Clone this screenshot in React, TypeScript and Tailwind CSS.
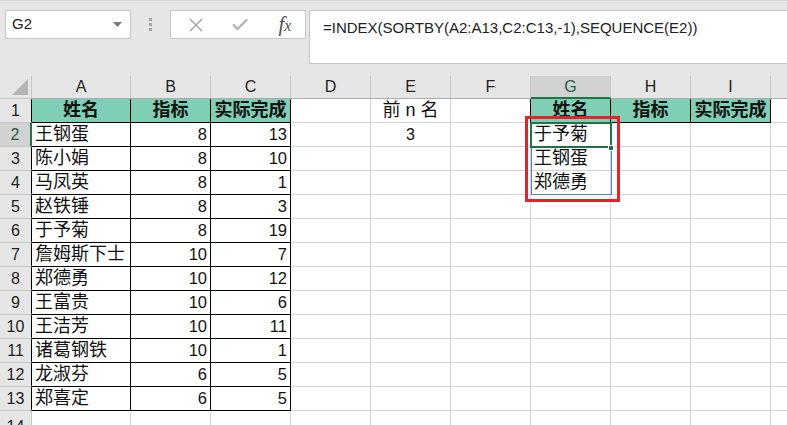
import React from "react";

const cols = ["A", "B", "C", "D", "E", "F", "G", "H", "I", "J"];

type Row = (string | number | null)[];

const data: Row[] = [
  ["姓名", "指标", "实际完成", null, "前 n 名", null, "姓名", "指标", "实际完成", null],
  ["王钢蛋", 8, 13, null, "3", null, "于予菊", null, null, null],
  ["陈小娟", 8, 10, null, null, null, "王钢蛋", null, null, null],
  ["马凤英", 8, 1, null, null, null, "郑德勇", null, null, null],
  ["赵铁锤", 8, 3, null, null, null, null, null, null, null],
  ["于予菊", 8, 19, null, null, null, null, null, null, null],
  ["詹姆斯下士", 10, 7, null, null, null, null, null, null, null],
  ["郑德勇", 10, 12, null, null, null, null, null, null, null],
  ["王富贵", 10, 6, null, null, null, null, null, null, null],
  ["王洁芳", 10, 11, null, null, null, null, null, null, null],
  ["诸葛钢铁", 10, 1, null, null, null, null, null, null, null],
  ["龙淑芬", 6, 5, null, null, null, null, null, null, null],
  ["郑喜定", 6, 5, null, null, null, null, null, null, null],
  [null, null, null, null, null, null, null, null, null, null],
];

function cellClass(r: number, c: number): string {
  const inTable = (r >= 1 && r <= 13 && c <= 2) || (r === 1 && c >= 6 && c <= 8);
  const leftOfG1 = r === 1 && c === 5;
  const header = r === 1 && (c <= 2 || (c >= 6 && c <= 8));
  let cls = "h-[24px] border-b border-r overflow-hidden whitespace-nowrap flex items-center ";
  if (inTable) cls += "border-b-black border-r-black ";
  else if (leftOfG1) cls += "border-b-[#d4d4d4] border-r-black ";
  else cls += "border-[#d4d4d4] ";
  if (header) cls += "bg-[#7fcfb6] justify-center font-bold ";
  else cls += "bg-white ";
  return cls;
}

export default function App() {
  return (
    <div
      className="w-[787px] h-[425px] overflow-hidden bg-white relative"
      style={{ fontFamily: '"Liberation Sans", "Noto Sans CJK SC", sans-serif' }}
    >
      {/* Formula bar area */}
      <div className="h-[76px] bg-[#e6e6e6] border-t border-[#d9d9d9] flex items-start pt-[9px] pl-[5px]">
        <div className="w-[126px] h-[29px] bg-white border border-[#c6c6c6] flex items-center justify-between pl-[6px] pr-[8px]">
          <span className="text-[15px] text-[#222]">G2</span>
          <svg width="9" height="5" viewBox="0 0 9 5">
            <path d="M0 0 L9 0 L4.5 5 Z" fill="#7a7a7a" />
          </svg>
        </div>
        <div className="w-[39px] h-[29px] flex flex-col items-center justify-center gap-[2px]">
          <div className="w-[3px] h-[3px] bg-[#a6a6a6]" />
          <div className="w-[3px] h-[3px] bg-[#a6a6a6]" />
          <div className="w-[3px] h-[3px] bg-[#a6a6a6]" />
        </div>
        <div className="w-[136px] h-[29px] bg-white border border-[#c6c6c6] flex items-center">
          <div className="w-[44px] flex justify-center pl-[6px]">
            <svg width="14" height="14" viewBox="0 0 14 14">
              <path d="M1 1 L13 13 M13 1 L1 13" stroke="#a8a8a8" strokeWidth="1.6" />
            </svg>
          </div>
          <div className="w-[46px] flex justify-center pl-[4px]">
            <svg width="16" height="13" viewBox="0 0 16 13">
              <path d="M1 6.5 L5.5 11 L15 1.5" stroke="#b0b0b0" strokeWidth="2.2" fill="none" />
            </svg>
          </div>
          <div className="flex-1 flex justify-center pl-[4px]">
            <span
              className="italic text-[21px] text-[#505050] leading-none"
              style={{ fontFamily: '"Liberation Serif", serif' }}
            >
              f<span className="text-[16px]">x</span>
            </span>
          </div>
        </div>
        <div className="ml-[3px] flex-1 h-[54px] bg-white border border-[#c6c6c6] border-r-0 pl-[13px] pt-[5px]">
          <span className="text-[15px] text-[#222]">=INDEX(SORTBY(A2:A13,C2:C13,-1),SEQUENCE(E2))</span>
        </div>
      </div>

      {/* Grid */}
      <div className="relative">
        <div className="grid grid-cols-[32px_99px_80px_80px_80px_80px_80px_80px_80px_80px_80px] text-[#111]">
          {/* Column header row */}
          <div className="h-[23px] bg-[#e6e6e6] border-r border-b border-[#c6c6c6] relative">
            <svg className="absolute right-[3px] bottom-[3px]" width="16" height="16" viewBox="0 0 16 16">
              <path d="M16 0 L16 16 L0 16 Z" fill="#b4b4b4" />
            </svg>
          </div>
          {cols.map((c) =>
            c === "G" ? (
              <div
                key={c}
                className="h-[23px] bg-[#d2d2d2] border-r border-[#c6c6c6] border-b-2 border-b-[#217346] flex items-center justify-center text-[16px] text-[#1e5e3a]"
              >
                {c}
              </div>
            ) : (
              <div
                key={c}
                className="h-[23px] bg-[#e6e6e6] border-r border-b border-[#c6c6c6] border-b-[#ababab] flex items-center justify-center text-[16px] text-[#222]"
              >
                {c === "J" ? "" : c}
              </div>
            )
          )}

          {data.map((row, ri) => {
            const r = ri + 1;
            return (
              <React.Fragment key={r}>
                {r === 2 ? (
                  <div className="h-[24px] bg-[#d2d2d2] border-b border-[#c6c6c6] border-r-2 border-r-[#217346] flex items-center justify-center text-[16px] text-[#1e5e3a]">
                    {r}
                  </div>
                ) : r <= 13 ? (
                  <div className="h-[24px] bg-[#e6e6e6] border-b border-[#c6c6c6] border-r border-r-black flex items-center justify-center text-[16px] text-[#222]">
                    {r}
                  </div>
                ) : (
                  <div className="h-[24px] bg-[#e6e6e6] border-b border-r border-[#c6c6c6] flex items-start pt-[4px] justify-center text-[16px] text-[#222]">
                    {r}
                  </div>
                )}
                {row.map((v, ci) => {
                  const cls = cellClass(r, ci);
                  let align = "";
                  if (typeof v === "number") align = "justify-end pr-[3px] text-[16.5px]";
                  else if (r === 1) align = "justify-center text-[18px]";
                  else if (ci === 4) align = "justify-center text-[16px]";
                  else align = "justify-start pl-[3px] text-[18px]";
                  return (
                    <div key={ci} className={cls + align}>
                      {v === null ? "" : v}
                    </div>
                  );
                })}
              </React.Fragment>
            );
          })}
        </div>

        {/* Spill range border */}
        <div className="absolute left-[531px] top-[47px] w-[81px] h-[72px] border border-[#5b7fc4] pointer-events-none" />
        {/* Active cell */}
        <div className="absolute left-[530px] top-[46px] w-[82px] h-[26px] border-2 border-[#217346] pointer-events-none" />
        <div className="absolute left-[608px] top-[69px] w-[6px] h-[6px] bg-[#217346] border border-white pointer-events-none" />
        {/* Red highlight box */}
        <div className="absolute left-[525px] top-[40px] w-[95px] h-[86px] border-[3px] border-[#e8202a] pointer-events-none" />
      </div>
    </div>
  );
}
